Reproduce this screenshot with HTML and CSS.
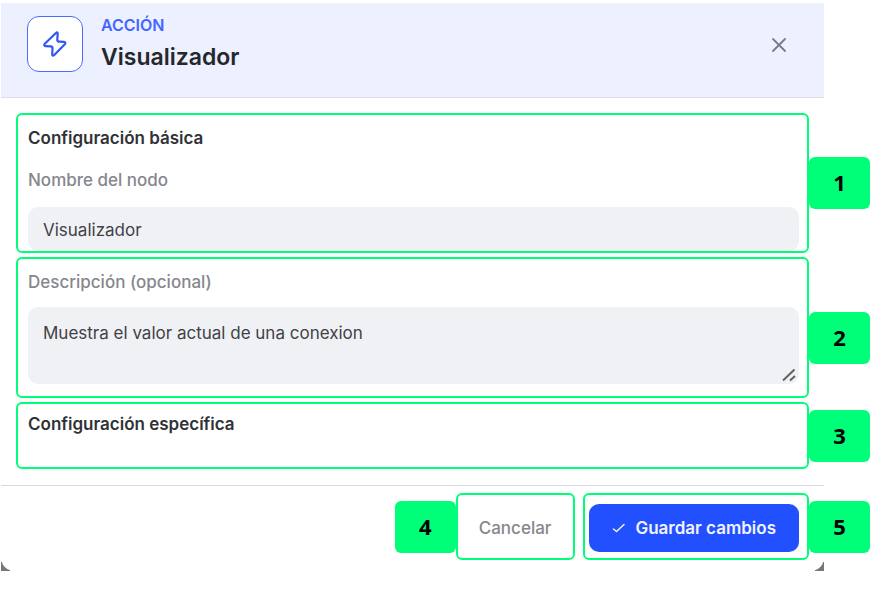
FILE: index.html
```html
<!DOCTYPE html>
<html lang="es">
<head>
<meta charset="utf-8">
<meta name="viewport" content="width=device-width, initial-scale=1">
<title>Visualizador</title>
<link rel="stylesheet" href="styles.css">
</head>
<body>
<form class="dialog">
  <header class="header">
    <span class="node-icon">
      <svg width="26" height="28" viewBox="0 0 26 28" fill="none" stroke="currentColor" stroke-width="2.200" stroke-linejoin="round" aria-hidden="true"><path d="M14.200 2.800 2.800 13.700C1.800 14.700 2.100 16 3.500 16.100L8.800 16.400C10.100 16.500 10.600 17.200 10.500 18.500L10.200 24.200C10.100 25.700 11.100 26 12 25.200L22.800 14.300C23.800 13.300 23.400 12 22.100 11.900L17 11.600C15.700 11.500 15.200 10.800 15.300 9.500L15.700 3.800C15.800 2.300 15 2 14.200 2.800Z"/></svg>
    </span>
    <div class="heading">
      <p class="kind">ACCIÓN</p>
      <h1 class="title">Visualizador</h1>
    </div>
    <button class="close" type="button" aria-label="Cerrar">
      <svg width="16" height="16" viewBox="0 0 16 16" fill="none" stroke="currentColor" stroke-width="1.800" stroke-linecap="round" aria-hidden="true"><path d="M2 2l12 12M14 2 2 14"/></svg>
    </button>
  </header>
  <main class="content">
    <section class="marked section basic">
      <h2 class="subtitle">Configuración básica</h2>
      <label class="label" for="name">Nombre del nodo</label>
      <input class="field" id="name" type="text" value="Visualizador">
      <span class="badge badge-right">1</span>
    </section>
    <section class="marked section description">
      <label class="label" for="description">Descripción (opcional)</label>
      <div class="area">
        <textarea class="field multiline" id="description">Muestra el valor actual de una conexion</textarea>
        <svg class="grip" width="14" height="14" viewBox="0 0 14 14" fill="none" stroke="currentColor" stroke-width="2" aria-hidden="true"><path d="M1 12.500 12.500 1.500M8 12.500l5-4.500"/></svg>
      </div>
      <span class="badge badge-right badge-low">2</span>
    </section>
    <section class="marked section specific">
      <h2 class="subtitle">Configuración específica</h2>
      <span class="badge badge-right">3</span>
    </section>
  </main>
  <footer class="footer">
    <div class="marked action">
      <button class="button cancel" type="button">Cancelar</button>
      <span class="badge badge-left">4</span>
    </div>
    <div class="marked action">
      <button class="button save" type="submit">
        <svg width="13" height="10" viewBox="0 0 13 10" fill="none" stroke="currentColor" stroke-width="1.500" stroke-linecap="round" stroke-linejoin="round" aria-hidden="true"><path d="M1.500 6 4.500 8.500 12 1.500"/></svg>
        Guardar cambios
      </button>
      <span class="badge badge-right">5</span>
    </div>
  </footer>
</form>
</body>
</html>
```
FILE: styles.css
```css
* {
  box-sizing: border-box;
}

body {
  margin: 0;
  padding: 3px 58px 0 1px;
  background: #fff;
  color: #303236;
  font-family: Inter, "Liberation Sans", sans-serif;
  font-size: 17px;
  line-height: 24px;
}

h1, h2, p {
  margin: 0;
}

.dialog {
  position: relative;
  padding-bottom: 11px;
}

.dialog::before,
.dialog::after {
  content: "";
  position: absolute;
  bottom: 0;
  width: 9px;
  height: 9px;
}

.dialog::before {
  left: 0;
  background: radial-gradient(circle at 12px -3px, transparent 11px, #777 12px);
}

.dialog::after {
  right: 0;
  background: radial-gradient(circle at -3px -3px, transparent 11px, #777 12px);
}

.header {
  display: flex;
  align-items: flex-start;
  gap: 18px;
  padding: 13px 37px 20px 26px;
  border-bottom: 1px solid #dadde6;
  background: #ecf0ff;
}

.node-icon {
  display: grid;
  place-items: center;
  width: 56px;
  height: 56px;
  border: 1px solid #4a6cff;
  border-radius: 12px;
  background: #fff;
  color: #3157f5;
}

.heading {
  flex: 1;
}

.kind {
  color: #4266ff;
  font-size: 16px;
  font-weight: 600;
  line-height: 19px;
}

.title {
  font-size: 23px;
  font-weight: 600;
  line-height: 44px;
  height: 42px;
  color: #25272b;
}

.close {
  display: grid;
  margin-top: 21px;
  padding: 0;
  border: 0;
  background: none;
  color: #777b85;
}

.content {
  display: flex;
  flex-direction: column;
  gap: 4px;
  padding: 15px 15px 16px;
}

.marked {
  position: relative;
  border: 2px solid #00ff78;
  border-radius: 6px;
}

.section {
  display: flex;
  flex-direction: column;
  padding: 0 8px 0 10px;
}

.basic {
  padding-top: 11px;
}

.description {
  padding-top: 11px;
  padding-bottom: 12px;
}

.specific {
  padding-top: 8px;
  padding-bottom: 31px;
}

.subtitle {
  font-size: 17px;
  font-weight: 600;
}

.label {
  color: #85878d;
  font-weight: 500;
}

.subtitle + .label {
  margin-top: 18px;
}

.field {
  display: block;
  width: 100%;
  margin: 0;
  padding: 11px 15px 9px;
  border: 0;
  border-radius: 10px;
  background: #f0f1f5;
  color: #404247;
  font: inherit;
}

.basic .field {
  height: 44px;
  margin-top: 15px;
}

.area {
  position: relative;
  margin-top: 13px;
}

.multiline {
  height: 77px;
  padding-top: 14px;
  resize: none;
}

.grip {
  position: absolute;
  right: 3px;
  bottom: 2px;
  color: #606266;
}

.badge {
  position: absolute;
  top: 50%;
  display: grid;
  place-items: center;
  width: 61px;
  height: 52px;
  padding-bottom: 2px;
  border-radius: 6px;
  background: #00ff78;
  color: #000;
  font-family: "Noto Sans", sans-serif;
  font-size: 22px;
  font-weight: 700;
  transform: translateY(-50%);
}

.badge-right {
  left: calc(100% + 2px);
}

.badge-left {
  right: calc(100% + 2px);
}

.badge-low {
  top: 58%;
}

.footer {
  display: flex;
  justify-content: flex-end;
  gap: 8px;
  padding: 7px 15px 0;
  border-top: 1px solid #d8dae3;
}

.action {
  padding: 9px 8px 6px 4px;
}

.button {
  display: flex;
  align-items: center;
  justify-content: center;
  gap: 10px;
  height: 48px;
  padding-top: 0;
  padding-bottom: 1px;
  border: 0;
  border-radius: 10px;
  font: inherit;
  font-weight: 500;
}

.cancel {
  padding-left: 17px;
  padding-right: 14px;
  background: none;
  color: #85878d;
}

.save {
  padding-left: 23px;
  padding-right: 23px;
  background: #2350ff;
  color: #f1f4ff;
  font-weight: 600;
}
```
